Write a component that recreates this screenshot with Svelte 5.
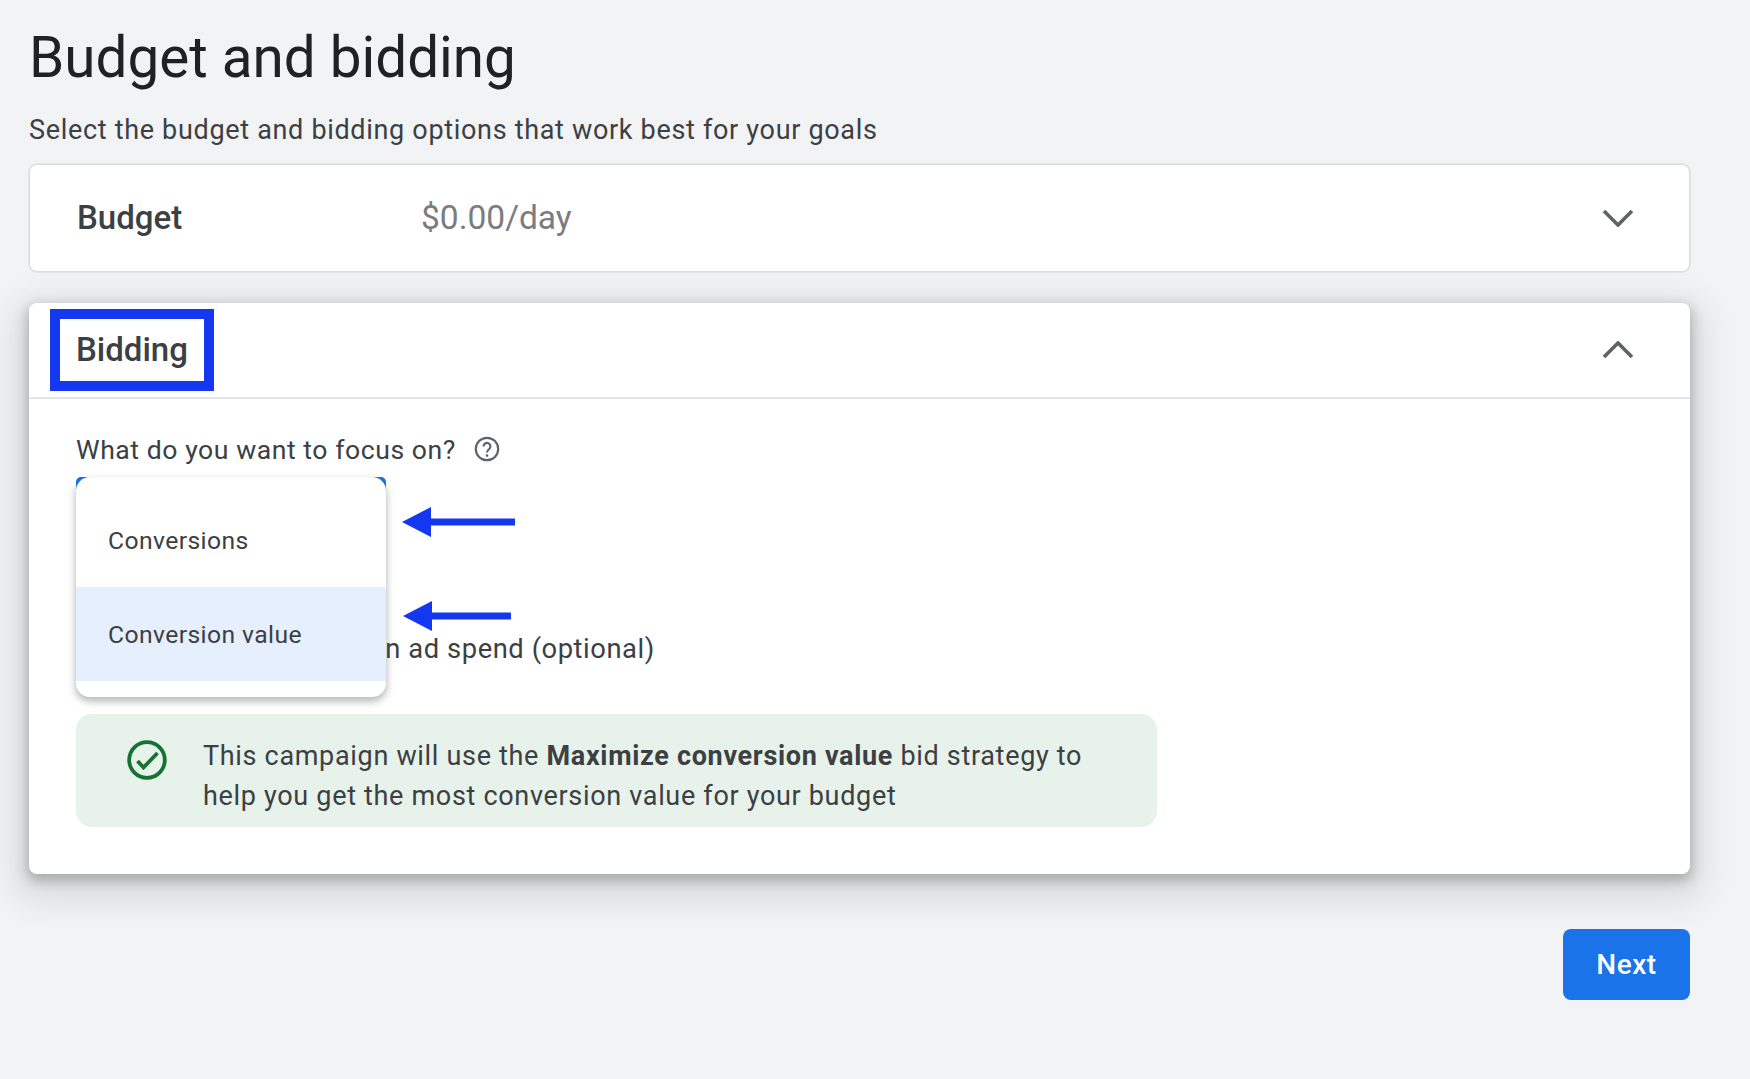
<script>
	let options = ['Conversions', 'Conversion value'];
	let selected = 'Conversion value';
</script>

<main class="page">
	<h1>Budget and bidding</h1>
	<p class="subtitle">Select the budget and bidding options that work best for your goals</p>

	<section class="card budget">
		<span class="card-title">Budget</span>
		<span class="amount">$0.00/day</span>
		<svg class="chevron" viewBox="0 0 32 18" aria-hidden="true"><path d="M2 2l14 14L30 2" /></svg>
	</section>

	<section class="card bidding">
		<header class="bidding-head">
			<span class="card-title">Bidding</span>
			<svg class="chevron" viewBox="0 0 32 18" aria-hidden="true"><path d="M2 16L16 2l14 14" /></svg>
			<div class="highlight-box"></div>
		</header>

		<div class="bidding-body">
			<div class="question">
				<span>What do you want to focus on?</span>
				<svg class="help" viewBox="0 0 26 26" aria-hidden="true">
					<circle cx="13" cy="13" r="11.2" />
					<path d="M9.6 10.4a3.4 3.4 0 1 1 5.6 2.6c-1.3 1-2.2 1.7-2.2 3.4" />
					<circle class="dot" cx="13" cy="19.6" r="1.3" />
				</svg>
			</div>

			<div class="field">
				<div class="select-edge"></div>
				<ul class="menu">
					{#each options as option}
						<li class:active={option === selected}>{option}</li>
					{/each}
				</ul>
				<svg class="arrow first" viewBox="0 0 113 30" aria-hidden="true"><path d="M0 15L29 0v11.5h84v7H29V30z" /></svg>
				<svg class="arrow second" viewBox="0 0 108 30" aria-hidden="true"><path d="M0 15L29 0v11.5h79v7H29V30z" /></svg>
			</div>

			<div class="optional">Set a target return on ad spend (optional)</div>

			<div class="notice">
				<svg class="check" viewBox="0 0 40 40" aria-hidden="true">
					<circle cx="20" cy="20" r="17.8" />
					<path d="M10.5 21l6 6.5L30.5 13" />
				</svg>
				<p>This campaign will use the <b>Maximize conversion value</b> bid strategy to help you get the most conversion value for your budget</p>
			</div>
		</div>
	</section>

	<div class="actions">
		<button type="button">Next</button>
	</div>
</main>

<style>
	:global(body) {
		margin: 0;
		background: #f1f3f4;
	}

	.page {
		box-sizing: border-box;
		width: 1750px;
		height: 1079px;
		padding: 0 60px 0 29px;
		font-family: Roboto, "Liberation Sans", sans-serif;
		color: #3c4043;
		overflow: hidden;
	}

	h1 {
		margin: 0;
		padding-top: 24px;
		font-size: 56.6px;
		line-height: 68px;
		font-weight: 400;
		color: #202124;
	}

	.subtitle {
		margin: 22px 0 0;
		font-size: 27px;
		line-height: 32px;
		letter-spacing: 0.68px;
	}

	.card {
		background: #fff;
		border-radius: 8px;
		box-sizing: border-box;
	}

	.budget {
		display: flex;
		align-items: center;
		height: 108px;
		margin-top: 18px;
		padding: 0 55px 0 47px;
		border: 1px solid #dadce0;
		box-shadow: 0 0 0 1px #e3e5e8;
	}

	.card-title {
		margin-top: -2px;
		font-size: 33px;
		font-weight: 500;
		color: #3c4043;
		width: 344px;
		flex: none;
	}

	.amount {
		margin-top: -2px;
		font-size: 33.5px;
		color: #7a7c7f;
	}

	.chevron {
		width: 32px;
		height: 18px;
		margin-left: auto;
		fill: none;
		stroke: #5f6368;
		stroke-width: 3.6;
	}

	.bidding {
		margin-top: 31px;
		height: 571px;
		box-shadow: 0 5px 12px 2px rgba(60, 64, 67, 0.3), 0 12px 34px 12px rgba(60, 64, 67, 0.14);
	}

	.bidding-head {
		position: relative;
		display: flex;
		align-items: center;
		height: 94px;
		padding: 0 56px 0 47px;
		border-bottom: 2px solid #e3e5e8;
	}

	.highlight-box {
		position: absolute;
		left: 21px;
		top: 6px;
		width: 144px;
		height: 62px;
		border: 10px solid #1438f0;
	}

	.bidding-body {
		padding: 31px 47px 0;
	}

	.question {
		display: flex;
		align-items: center;
		gap: 18px;
		height: 38px;
		margin-bottom: 2px;
		font-size: 26.6px;
		letter-spacing: 0.55px;
	}

	.help {
		width: 26px;
		height: 26px;
		fill: none;
		stroke: #5f6368;
		stroke-width: 2.2;
	}

	.help .dot {
		fill: #5f6368;
		stroke: none;
	}

	.field {
		position: relative;
		height: 147px;
	}

	.select-edge {
		position: absolute;
		left: 0;
		top: 7px;
		width: 310px;
		height: 40px;
		background: #1a73e8;
		border-radius: 5px 5px 0 0;
	}

	.menu {
		position: absolute;
		z-index: 2;
		left: 0;
		top: 7px;
		width: 310px;
		height: 220px;
		margin: 0;
		padding: 16px 0 15px;
		box-sizing: border-box;
		list-style: none;
		background: #fff;
		border-radius: 14px;
		overflow: hidden;
		box-shadow: 0 4px 7px 1px rgba(60, 64, 67, 0.34);
	}

	.menu li {
		display: flex;
		align-items: center;
		height: 94px;
		padding: 0 32px;
		font-size: 24.7px;
		letter-spacing: 0.4px;
	}

	.menu li.active {
		background: #e5effd;
	}

	.arrow {
		position: absolute;
		left: 326px;
		fill: #1438f0;
		width: 113px;
		height: 30px;
	}

	.arrow.first {
		top: 37px;
	}

	.arrow.second {
		top: 131px;
		left: 327px;
		width: 108px;
	}

	.optional {
		display: flex;
		align-items: center;
		height: 64px;
		padding-left: 57px;
		font-size: 27.35px;
		letter-spacing: 0.55px;
	}

	.notice {
		display: flex;
		box-sizing: border-box;
		width: 1081px;
		height: 113px;
		margin-top: 33px;
		padding: 23px 60px 0 51px;
		background: #e6f2ea;
		border-radius: 16px;
	}

	.notice p {
		margin: 0;
		font-size: 27px;
		line-height: 39.5px;
		letter-spacing: 0.68px;
	}

	.check {
		flex: none;
		width: 40px;
		height: 40px;
		margin: 3px 36px 0 0;
		fill: none;
		stroke: #137333;
		stroke-width: 3.8;
	}

	.actions {
		display: flex;
		justify-content: flex-end;
		margin-top: 55px;
	}

	button {
		width: 127px;
		height: 71px;
		border: 0;
		border-radius: 8px;
		background: #1a73e8;
		color: #fff;
		font: 500 28px Roboto, "Liberation Sans", sans-serif;
		letter-spacing: 0.5px;
	}
</style>
